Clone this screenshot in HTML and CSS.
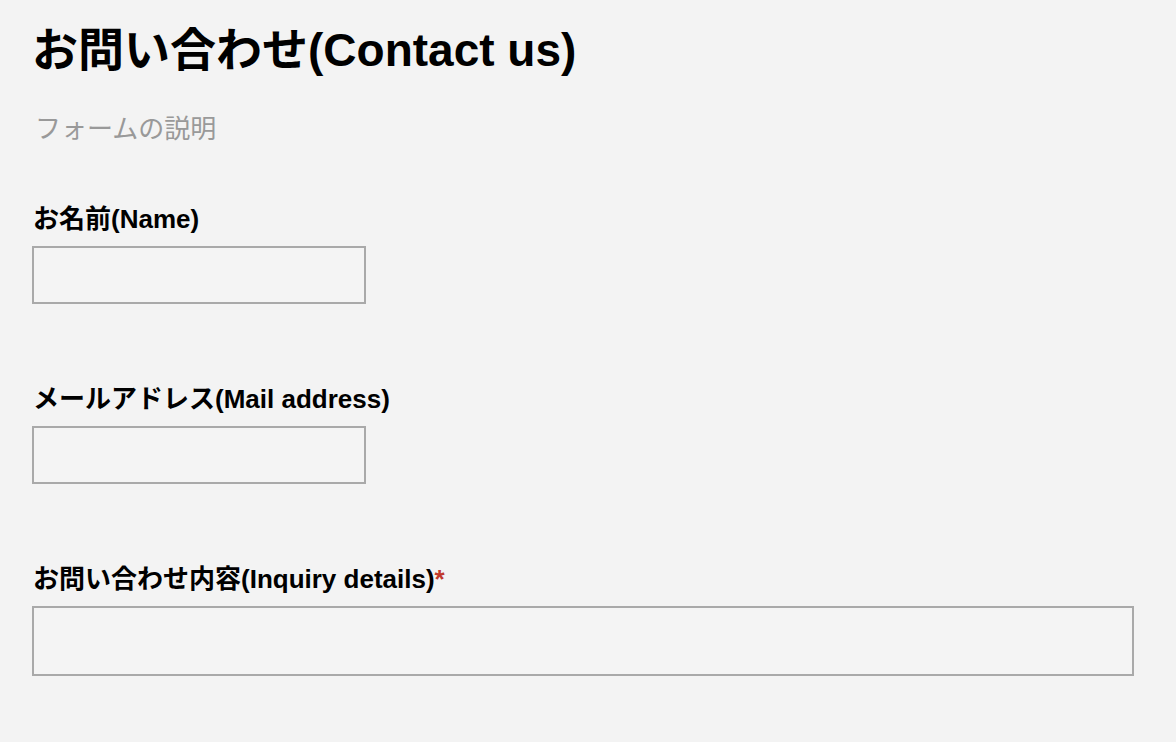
FILE: index.html
```html
<!DOCTYPE html>
<html lang="ja">
<head>
<meta charset="utf-8">
<title>お問い合わせ</title>
<link rel="stylesheet" href="styles.css">
</head>
<body>
<main class="page">
  <h1 class="title">お問い合わせ(Contact us)</h1>
  <p class="desc">フォームの説明</p>
  <form class="form">
    <div class="field">
      <label class="label" for="name">お名前(Name)</label>
      <input class="input" id="name" type="text">
    </div>
    <div class="field">
      <label class="label" for="mail">メールアドレス(Mail address)</label>
      <input class="input" id="mail" type="email">
    </div>
    <div class="field">
      <label class="label" for="inq">お問い合わせ内容(Inquiry details)<span class="req">*</span></label>
      <textarea class="textarea" id="inq"></textarea>
    </div>
  </form>
</main>
</body>
</html>
```
FILE: styles.css
```css
html, body {
  margin: 0;
  padding: 0;
  background: #f3f3f3;
}
body {
  font-family: "Liberation Sans", "Noto Sans CJK JP", sans-serif;
  color: #000;
}
.page {
  padding: 23px 0 0 32px;
}
.title {
  margin: 0;
  font-size: 46px;
  line-height: 54px;
  font-weight: bold;
}
.desc {
  margin: 37px 0 0 3px;
  font-size: 26px;
  line-height: 30px;
  color: #999;
}
.form {
  display: flex;
  flex-direction: column;
  gap: 80px;
  margin-top: 60px;
}
.field {
  display: flex;
  flex-direction: column;
  align-items: flex-start;
  gap: 12px;
}
.label {
  font-size: 26px;
  line-height: 30px;
  font-weight: bold;
  padding-left: 1px;
}
.req {
  color: #c0392b;
}
.input, .textarea {
  box-sizing: border-box;
  margin: 0;
  border: 2px solid #a9a9a9;
  border-radius: 0;
  background: #f4f4f4;
  outline: none;
}
.input {
  width: 334px;
  height: 58px;
}
.textarea {
  width: 1102px;
  height: 70px;
  resize: none;
}
```
